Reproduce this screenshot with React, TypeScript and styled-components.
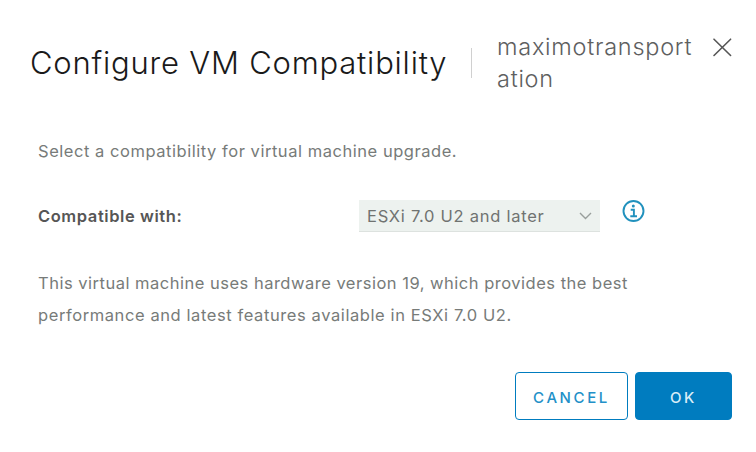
import React from "react";
import styled, { createGlobalStyle } from "styled-components";

const GlobalStyle = createGlobalStyle`
  * { box-sizing: border-box; }
  body { margin: 0; background: #fff; }
`;

const Dialog = styled.section`
  width: 756px;
  height: 452px;
  padding: 31px 24px 32px 30px;
  display: flex;
  flex-direction: column;
  background: #fff;
  color: #777b79;
  font-family: Inter, sans-serif;
  font-size: 16.5px;
`;

const Header = styled.header`
  display: flex;
  height: 64px;
`;

const Title = styled.h1`
  margin: 0;
  width: 441px;
  font-size: 31px;
  font-weight: 300;
  line-height: 64px;
  letter-spacing: 0.79px;
  color: #1a1a1a;
  white-space: nowrap;
`;

const Divider = styled.span`
  width: 1px;
  height: 30px;
  margin: 17px 25px 0 0;
  background: #d0d0d0;
`;

const Subject = styled.h2`
  margin: 0;
  width: 215px;
  font-size: 23.5px;
  font-weight: 300;
  line-height: 32px;
  letter-spacing: 0.74px;
  color: #5e605f;
  white-space: nowrap;
`;

const CloseButton = styled.button`
  width: 21px;
  height: 21px;
  margin: 6px -1px 0 0;
  padding: 0;
  border: 0;
  background: none;
  svg { display: block; }
`;

const Body = styled.div`
  flex: 1;
  padding: 40px 0 0 8px;
`;

const Text = styled.p<{ $spacing: number }>`
  margin: 0;
  line-height: 32px;
  font-weight: 400;
  letter-spacing: ${(p) => p.$spacing}px;
  white-space: nowrap;
`;

const Field = styled.div`
  display: flex;
  height: 32px;
  margin: 33px 0 35px;
`;

const Label = styled.label`
  width: 321px;
  line-height: 32px;
  font-weight: 600;
  letter-spacing: 0.58px;
  color: #565656;
`;

const Select = styled.div`
  display: flex;
  align-items: center;
  justify-content: space-between;
  width: 241px;
  height: 32px;
  padding: 0 8px;
  background: #edf2ef;
  border-bottom: 1px solid #dde2df;
  color: #707371;
  letter-spacing: 0.74px;
  white-space: nowrap;
`;

const InfoIcon = styled.svg`
  margin: 0 0 0 22px;
`;

const Footer = styled.footer`
  display: flex;
  justify-content: flex-end;
  gap: 7px;
`;

const Button = styled.button<{ $primary?: boolean }>`
  width: ${(p) => (p.$primary ? 97 : 113)}px;
  height: 48px;
  padding: 0;
  border: 1px solid #007cbf;
  border-radius: 4px;
  background: ${(p) => (p.$primary ? "#007cbf" : "#fff")};
  color: ${(p) => (p.$primary ? "#d9edf7" : "#2290c8")};
  font: 500 15px Inter, sans-serif;
  letter-spacing: 2.6px;
  padding-top: 2px;
`;

export default function App() {
  return (
    <Dialog role="dialog" aria-label="Configure VM Compatibility">
      <GlobalStyle />
      <Header>
        <Title>Configure VM Compatibility</Title>
        <Divider />
        <Subject>maximotransport<br />ation</Subject>
        <CloseButton aria-label="Close">
          <svg width="21" height="21" viewBox="0 0 21 21" fill="none" stroke="#565656" strokeWidth="1.6" strokeLinecap="round">
            <path d="M2 2.2 18.6 18.5M18.6 2.2 2 18.5" />
          </svg>
        </CloseButton>
      </Header>
      <Body>
        <Text $spacing={0.54}>Select a compatibility for virtual machine upgrade.</Text>
        <Field>
          <Label>Compatible with:</Label>
          <Select>
            ESXi 7.0 U2 and later
            <svg width="13" height="8" viewBox="0 0 13 8" fill="none" stroke="#999f9c" strokeWidth="1.4">
              <path d="m1 1 5.5 5.5L12 1" />
            </svg>
          </Select>
          <InfoIcon width="23" height="23" viewBox="0 0 23 23" fill="none" stroke="#2191bd">
            <circle cx="11.5" cy="11" r="10" strokeWidth="1.9" />
            <circle cx="11.3" cy="6.1" r="1.5" fill="#2191bd" stroke="none" />
            <path d="M8.7 9.8h3.2v6.2M8.3 16.3h6.7" strokeWidth="1.9" />
          </InfoIcon>
        </Field>
        <Text $spacing={0.5}>This virtual machine uses hardware version 19, which provides the best</Text>
        <Text $spacing={0.59}>performance and latest features available in ESXi 7.0 U2.</Text>
      </Body>
      <Footer>
        <Button>CANCEL</Button>
        <Button $primary>OK</Button>
      </Footer>
    </Dialog>
  );
}
